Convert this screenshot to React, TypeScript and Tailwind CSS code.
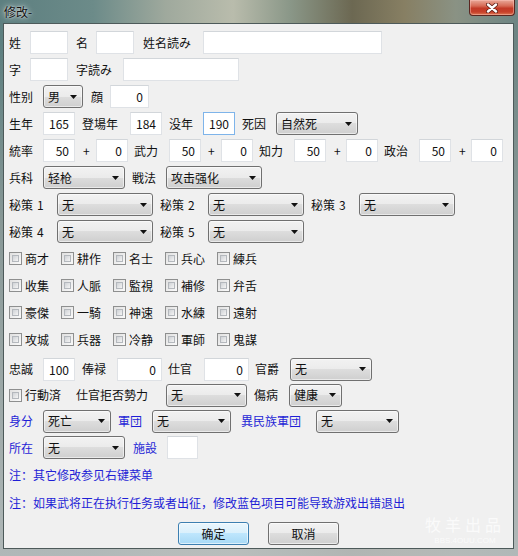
import React from "react";

const FONT = "font-['Noto_Sans_CJK_SC','Noto_Sans_CJK_JP',sans-serif]";

function L({ c = "", blue, children }: { c?: string; blue?: boolean; children: React.ReactNode }) {
  return (
    <span className={`${c} shrink-0 whitespace-nowrap text-[12px] leading-[16px] ${blue ? "text-[#1f1fd6]" : "text-[#111]"}`}>
      {children}
    </span>
  );
}

function Box({ c = "", value, hot }: { c?: string; value?: string; hot?: boolean }) {
  return (
    <div
      className={`${c} h-[23px] shrink-0 border bg-white pr-[5px] text-right text-[12px] leading-[21px] text-[#111] ${
        hot ? "border-[#7eb4ea]" : "border-[#dfe2e6] border-t-[#d2d6da]"
      }`}
    >
      {value}
    </div>
  );
}

function Combo({ c = "", value }: { c?: string; value: string }) {
  return (
    <div
      className={`${c} flex h-[23px] shrink-0 items-center justify-between rounded-[3px] border border-[#707070] bg-[linear-gradient(to_bottom,#f2f2f2_0%,#ebebeb_50%,#dddddd_50%,#cfcfcf_100%)] pl-[4px] pr-[5px] text-[12px] leading-[16px] text-[#111] shadow-[inset_0_0_0_1px_rgba(255,255,255,0.55)]`}
    >
      <span>{value}</span>
      <svg width="7" height="4" viewBox="0 0 7 4">
        <path d="M0 0H7L3.5 4Z" fill="#111" />
      </svg>
    </div>
  );
}

function Check() {
  return (
    <div className="h-[13px] w-[13px] shrink-0 border border-[#8e8f8f] bg-[linear-gradient(135deg,#e0e0e0,#fafafa)] p-[2px]">
      <div className="h-full w-full border border-[#b4b8bd] bg-[linear-gradient(135deg,#cfd2d6,#f4f4f4)]" />
    </div>
  );
}

function CheckItem({ label }: { label: string }) {
  return (
    <div className="flex w-[52px] shrink-0 items-center gap-[3px]">
      <Check />
      <L>{label}</L>
    </div>
  );
}

function Secret({ c = "", n }: { c?: string; n: number }) {
  return (
    <L c={c}>
      秘策<span className="ml-[4px]">{n}</span>
    </L>
  );
}

const skills = [
  ["商才", "耕作", "名士", "兵心", "練兵"],
  ["收集", "人脈", "監視", "補修", "弁舌"],
  ["豪傑", "一騎", "神速", "水練", "遠射"],
  ["攻城", "兵器", "冷静", "軍師", "鬼謀"],
];

export default function App() {
  return (
    <div
      className={`${FONT} relative flex h-[556px] w-[518px] flex-col overflow-hidden bg-[linear-gradient(to_bottom,rgba(0,0,0,0)_0%,rgba(0,0,0,0)_8%,rgba(150,160,158,0.75)_40%,rgba(185,190,190,0.9)_100%),linear-gradient(to_right,#5d7f80_0%,#6c8b89_18%,#9fa99d_32%,#b9bcac_45%,#8a9788_56%,#6c6852_68%,#877f63_78%,#8a9284_88%,#6d8584_100%)]`}
    >
      {/* title bar */}
      <div className="relative h-[23px] shrink-0">
        <span className="absolute left-[4px] top-[4px] text-[12px] leading-[16px] text-[#111] [text-shadow:0_0_6px_rgba(255,255,255,0.9),0_0_2px_rgba(255,255,255,0.8)]">
          修改-
        </span>
        <div className="absolute right-[3px] top-0 flex h-[16px] w-[46px] items-center justify-center rounded-b-[4px] border border-t-0 border-[#5a2620] bg-[linear-gradient(to_bottom,#e9a999_0%,#d66a55_40%,#c23a27_55%,#c7402a_80%,#dd7a55_100%)] shadow-[inset_0_0_0_1px_rgba(255,200,190,0.45)]">
          <svg width="12" height="10" viewBox="0 0 12 10">
            <path d="M2 1.5L10 8.5M10 1.5L2 8.5" stroke="#5a1a12" strokeWidth="4" strokeLinecap="round" />
            <path d="M2 1.5L10 8.5M10 1.5L2 8.5" stroke="#fff" strokeWidth="2.4" strokeLinecap="round" />
          </svg>
        </div>
      </div>

      {/* dialog body */}
      <div className="relative mb-[7px] ml-[3px] mr-[4px] flex flex-1 flex-col border border-[#4d5a5a] bg-[#f0f0f0] pl-[5px] pt-[5px]">
        <div className="flex h-[27px] items-center">
          <L c="w-[21px]">姓</L>
          <Box c="w-[38px]" />
          <L c="ml-[8px] w-[20px]">名</L>
          <Box c="w-[38px]" />
          <L c="ml-[9px] w-[60px]">姓名読み</L>
          <Box c="w-[179px]" />
        </div>
        <div className="flex h-[27px] items-center">
          <L c="w-[21px]">字</L>
          <Box c="w-[38px]" />
          <L c="ml-[8px] w-[47px]">字読み</L>
          <Box c="w-[116px]" />
        </div>
        <div className="flex h-[27px] items-center">
          <L c="w-[34px]">性别</L>
          <Combo c="w-[40px]" value="男" />
          <L c="ml-[8px] w-[19px]">顔</L>
          <Box c="w-[39px]" value="0" />
        </div>
        <div className="flex h-[27px] items-center">
          <L c="w-[34px]">生年</L>
          <Box c="w-[32px]" value="165" />
          <L c="ml-[7px] w-[48px]">登場年</L>
          <Box c="w-[32px]" value="184" />
          <L c="ml-[7px] w-[34px]">没年</L>
          <Box c="w-[32px]" value="190" hot />
          <L c="ml-[7px] w-[34px]">死因</L>
          <Combo c="w-[82px]" value="自然死" />
        </div>
        <div className="flex h-[27px] items-center">
          <L c="w-[34px]">統率</L>
          <Box c="w-[32px]" value="50" />
          <L c="ml-[8px] w-[13px]">+</L>
          <Box c="w-[32px]" value="0" />
          <L c="ml-[6px] w-[35px]">武力</L>
          <Box c="w-[32px]" value="50" />
          <L c="ml-[7px] w-[13px]">+</L>
          <Box c="w-[32px]" value="0" />
          <L c="ml-[6px] w-[35px]">知力</L>
          <Box c="w-[32px]" value="50" />
          <L c="ml-[8px] w-[12px]">+</L>
          <Box c="w-[32px]" value="0" />
          <L c="ml-[6px] w-[35px]">政治</L>
          <Box c="w-[32px]" value="50" />
          <L c="ml-[8px] w-[12px]">+</L>
          <Box c="w-[32px]" value="0" />
        </div>
        <div className="flex h-[27px] items-center">
          <L c="w-[34px]">兵科</L>
          <Combo c="w-[82px]" value="轻枪" />
          <L c="ml-[7px] w-[34px]">戦法</L>
          <Combo c="w-[96px]" value="攻击强化" />
        </div>
        <div className="flex h-[27px] items-center">
          <Secret c="w-[48px]" n={1} />
          <Combo c="w-[96px]" value="无" />
          <Secret c="ml-[7px] w-[48px]" n={2} />
          <Combo c="w-[96px]" value="无" />
          <Secret c="ml-[7px] w-[48px]" n={3} />
          <Combo c="w-[96px]" value="无" />
        </div>
        <div className="flex h-[27px] items-center">
          <Secret c="w-[48px]" n={4} />
          <Combo c="w-[96px]" value="无" />
          <Secret c="ml-[7px] w-[48px]" n={5} />
          <Combo c="w-[96px]" value="无" />
        </div>

        {skills.map((row, i) => (
          <div key={i} className="flex h-[27px] items-center">
            {row.map((s) => (
              <CheckItem key={s} label={s} />
            ))}
          </div>
        ))}

        <div className="mt-[3px] flex h-[26px] items-center">
          <L c="w-[34px]">忠誠</L>
          <Box c="w-[32px]" value="100" />
          <L c="ml-[7px] w-[35px]">俸禄</L>
          <Box c="w-[45px]" value="0" />
          <L c="ml-[6px] w-[36px]">仕官</L>
          <Box c="w-[45px]" value="0" />
          <L c="ml-[6px] w-[35px]">官爵</L>
          <Combo c="w-[82px]" value="无" />
        </div>
        <div className="flex h-[26px] items-center">
          <Check />
          <L c="ml-[3px] w-[51px]">行動済</L>
          <L c="w-[90px]">仕官拒否勢力</L>
          <Combo c="w-[81px]" value="无" />
          <L c="ml-[7px] w-[35px]">傷病</L>
          <Combo c="w-[53px]" value="健康" />
        </div>
        <div className="flex h-[26px] items-center">
          <L c="w-[34px]" blue>身分</L>
          <Combo c="w-[68px]" value="死亡" />
          <L c="ml-[7px] w-[34px]" blue>軍団</L>
          <Combo c="w-[79px]" value="无" />
          <L c="ml-[10px] w-[75px]" blue>異民族軍団</L>
          <Combo c="w-[83px]" value="无" />
        </div>
        <div className="flex h-[27px] items-center">
          <L c="w-[34px]" blue>所在</L>
          <Combo c="w-[82px]" value="无" />
          <L c="ml-[8px] w-[34px]" blue>施設</L>
          <Box c="w-[31px]" />
        </div>
        <div className="flex h-[27px] items-center">
          <L blue>注：其它修改参见右键菜单</L>
        </div>
        <div className="mt-[1px] flex h-[27px] items-center">
          <L blue>注：如果武将正在执行任务或者出征，修改蓝色项目可能导致游戏出错退出</L>
        </div>

        <div className="ml-[169px] mt-[6px] flex gap-[19px]">
          <div className="flex h-[23px] w-[71px] items-center justify-center rounded-[3px] border border-[#3c7fb1] bg-[linear-gradient(to_bottom,#eaf6fd_0%,#d9f0fc_50%,#bee6fd_50%,#a7d9f5_100%)] text-[12px] leading-[16px] text-[#111] shadow-[inset_0_0_0_1px_rgba(255,255,255,0.6)]">
            确定
          </div>
          <div className="flex h-[23px] w-[71px] items-center justify-center rounded-[3px] border border-[#707070] bg-[linear-gradient(to_bottom,#f2f2f2_0%,#ebebeb_50%,#dddddd_50%,#cfcfcf_100%)] text-[12px] leading-[16px] text-[#111] shadow-[inset_0_0_0_1px_rgba(255,255,255,0.6)]">
            取消
          </div>
        </div>

        {/* watermark */}
        <div className="pointer-events-none absolute bottom-[2px] right-[8px] flex flex-col items-center text-white/70">
          <span className="font-['Liberation_Serif','Noto_Sans_CJK_SC',serif] text-[16px] leading-[20px] tracking-[4px]">牧羊出品</span>
          <span className="font-['Liberation_Sans',sans-serif] text-[8px] leading-[10px]">BBS.4OUU.COM</span>
        </div>
      </div>
    </div>
  );
}
